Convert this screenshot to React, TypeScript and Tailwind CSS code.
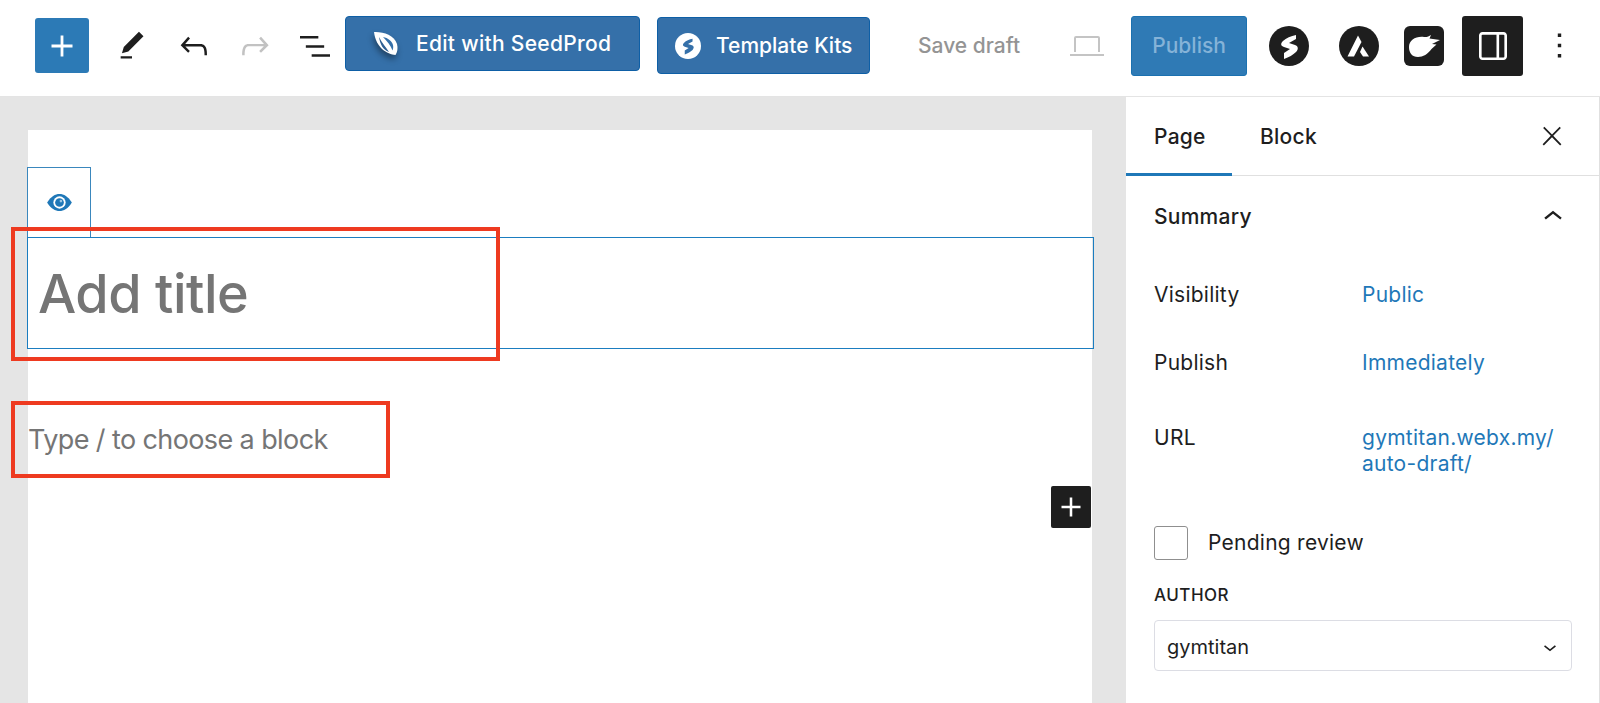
const BLUE = "text-[#1f78b8]";

function Wp({ d, size = 40, className = "" }: { d: string; size?: number; className?: string }) {
  return (
    <svg viewBox="0 0 24 24" width={size} height={size} fill="currentColor" className={`shrink-0 ${className}`}>
      <path d={d} />
    </svg>
  );
}

const ICONS = {
  plus: "M18 11.2h-5.2V6h-1.6v5.2H6v1.6h5.2V18h1.6v-5.2H18z",
  pencil: "M20.1 5.1L16.9 2 6.2 12.7l-1.3 4.4 4.5-1.3L20.1 5.1zM4 20.8h8v-1.5H4v1.5z",
  undo: "M18.3 11.7c-.6-.6-1.4-.9-2.3-.9H6.7l2.9-3.3-1.1-1-4.5 5L8.5 16l1-1-2.7-2.7H16c.5 0 .9.2 1.3.5 1 1 1 3.4 1 4.5v.3h1.5v-.2c0-1.5 0-4.3-1.5-5.7z",
  redo: "M15.6 6.5l-1.1 1 2.9 3.3H8c-.9 0-1.7.3-2.3.9-1.4 1.5-1.4 4.2-1.4 5.6v.2h1.5v-.3c0-1.1 0-3.5 1-4.5.3-.3.7-.5 1.3-.5h9.2L14.5 15l1.1 1.1 4.6-4.6-4.6-5z",
  list: "M3 6h11v1.5H3V6Zm3.5 5.5h11V13h-11v-1.5ZM21 17H10v1.5h11V17Z",
  sidebar: "M18 4H6c-1.1 0-2 .9-2 2v12c0 1.1.9 2 2 2h12c1.1 0 2-.9 2-2V6c0-1.1-.9-2-2-2zM6 18.5a.5.5 0 0 1-.5-.5V6a.5.5 0 0 1 .5-.5h8v13H6zm12.5-.5a.5.5 0 0 1-.5.5h-2.500v-13H18a.5.5 0 0 1 .5.5v12z",
  more: "M13 19h-2v-2h2v2zm0-6h-2v-2h2v2zm0-6h-2V5h2v2z",
  close: "M13 11.8l6.1-6.3-1-1-6.1 6.2-6.1-6.2-1 1 6.1 6.3-6.5 6.7 1 1 6.5-6.6 6.5 6.6 1-1z",
  chevronUp: "M6.5 12.4L12 8l5.5 4.4-.9 1.2L12 10l-4.5 3.6-1-1.2z",
  chevronDown: "M17.5 11.6L12 16l-5.5-4.4.9-1.2L12 14l4.500-3.6 1 1.2z",
};

function SeedLeaf() {
  return (
    <svg viewBox="0 0 25 25" width="25" height="25" className="shrink-0 drop-shadow-[-1px_4px_3px_rgba(0,0,0,0.4)]">
      <path d="M1 1c9-.5 20 3 23 12 1 4 .5 8-1.500 11C14 23 3 17 1 1z" fill="white" />
      <path d="M6 6c3 6 7 10 10 15-6-2-9-8-10-15z" fill="#2f5f92" />
      <path d="M10 6c5 1 9 4 10 8 .4 2 .2 4-.5 5.500C18 15 14 10 10 6z" fill="#3570a9" />
    </svg>
  );
}

function LogoS({ size, fill, bg }: { size: number; fill: string; bg: string }) {
  return (
    <svg viewBox="0 0 40 40" width={size} height={size} className="shrink-0">
      <circle cx="20" cy="20" r="20" fill={bg} />
      <path d="M27 9C22 10 17 12 14 15c-3 3-2 5 1 6l6 2-6 4v6c5-2 9-4 12-7 3-3 2-6-1-7l-6-2 7-4z" fill={fill} />
    </svg>
  );
}

function LogoAstra() {
  return (
    <svg viewBox="0 0 40 40" width="40" height="40" className="shrink-0">
      <circle cx="20" cy="20" r="20" fill="#1e1e1e" />
      <path d="M19 9.500L22.500 16 15 30.500H8.500z" fill="white" />
      <path d="M23.500 20.500L30 30.500h-6L21 26z" fill="white" />
    </svg>
  );
}

function LogoBird() {
  return (
    <svg viewBox="0 0 40 40" width="40" height="40" className="shrink-0">
      <rect width="40" height="40" rx="6" fill="#1e1e1e" />
      <path d="M5 21C5 14 12 10 20 11c3 .2 5-.6 7-2l-1.500 3.500L36 14l-8 4 4.500 .5-5 4.500C24 28 19 31 14 31 8 31 5 27 5 21z" fill="white" />
    </svg>
  );
}

function Eye() {
  return (
    <svg viewBox="0 0 28 20" width="27" height="19">
      <path d="M1 10C5 3.500 9.500 1 14 1s9 2.500 13 9c-4 6.500-8.500 9-13 9S5 16.500 1 10z" fill="#1f78b8" />
      <circle cx="14" cy="10" r="6.500" fill="white" />
      <circle cx="14" cy="10" r="4.600" fill="#1f78b8" />
      <circle cx="15.500" cy="8.500" r="1.400" fill="#9cc6e3" />
    </svg>
  );
}

function Header() {
  return (
    <header className="flex h-[97px] shrink-0 items-center border-b border-[#e4e4e4] bg-white pb-[5px] pl-[35px]">
      <button className="flex h-[55px] w-[54px] items-center justify-center rounded-[3px] bg-[#2c7ab6] text-white">
        <Wp d={ICONS.plus} size={42} />
      </button>
      <Wp d={ICONS.pencil} size={34} className="ml-[26px] text-[#1e1e1e]" />
      <Wp d={ICONS.undo} className="ml-[25px] text-[#1e1e1e]" />
      <Wp d={ICONS.redo} className="ml-[21px] text-[#c2c2c2]" />
      <Wp d={ICONS.list} className="ml-[20px] text-[#1e1e1e]" />
      <button className="mb-[5px] ml-[10px] flex h-[55px] w-[295px] items-center rounded-[4px] border border-[#0e5fa6] bg-[#3570a9] pl-[27px] text-[21px] font-medium tracking-[0.3px] text-white">
        <SeedLeaf />
        <span className="ml-[18px] pt-[2px]">Edit with SeedProd</span>
      </button>
      <button className="ml-[17px] flex h-[57px] w-[213px] items-center rounded-[4px] border border-[#0e5fa6] bg-[#3570a9] pl-[17px] text-[21px] font-medium text-white">
        <LogoS size={26} fill="#3570a9" bg="white" />
        <span className="ml-[15px]">Template Kits</span>
      </button>
      <span className="ml-[48px] text-[21px] font-medium text-[#949494]">Save draft</span>
      <svg viewBox="0 0 34 22" width="34" height="22" className="ml-[50px] shrink-0" fill="none" stroke="#c4c4c4" strokeWidth="2">
        <path d="M5 17V3a1 1 0 0 1 1-1h22a1 1 0 0 1 1 1v14" />
        <path d="M0 20h34" />
      </svg>
      <button className="ml-[27px] flex h-[60px] w-[116px] items-center justify-center rounded-[3px] border border-[#1b71b0] bg-[#2f7ab5] text-[21px] font-medium text-[#85b3d8]">
        Publish
      </button>
      <div className="ml-[22px]"><LogoS size={40} fill="white" bg="#1e1e1e" /></div>
      <div className="ml-[30px]"><LogoAstra /></div>
      <div className="ml-[25px]"><LogoBird /></div>
      <button className="ml-[18px] flex h-[60px] w-[61px] items-center justify-center rounded-[3px] bg-[#1e1e1e] text-white">
        <Wp d={ICONS.sidebar} size={42} />
      </button>
      <Wp d={ICONS.more} size={41} className="ml-[16px] text-[#1e1e1e]" />
    </header>
  );
}

function Canvas() {
  return (
    <main className="flex min-w-0 flex-1 flex-col bg-[#e5e5e5] pl-[28px] pr-[34px] pt-[33px]">
      <div className="flex-1 bg-white pt-[37px]">
        <div className="-ml-px -mb-px flex h-[71px] w-[64px] items-center justify-center border border-b-0 border-[#3a87bd] pb-[2px]">
          <Eye />
        </div>
        <div className="-ml-px -mr-[2px] flex h-[112px] items-center border border-[#1b7dc0] pl-[10px] pt-px">
          <span className="text-[54px] font-medium leading-none tracking-[-0.5px] text-[#757575]">Add title</span>
        </div>
        <p className="mt-[69px] text-[27px] leading-[44px] tracking-[-0.6px] text-[#757575]">Type / to choose a block</p>
        <div className="mr-px mt-[24px] flex justify-end">
          <button className="flex h-[42px] w-[40px] items-center justify-center rounded-[2px] bg-[#1e1e1e] text-white">
            <Wp d={ICONS.plus} size={38} />
          </button>
        </div>
      </div>
    </main>
  );
}

function Row({ label, className, children }: { label: string; className: string; children: React.ReactNode }) {
  return (
    <div className={`flex ${className}`}>
      <span className="w-[208px] shrink-0 text-[#1e1e1e]">{label}</span>
      <div className={BLUE}>{children}</div>
    </div>
  );
}

function Sidebar() {
  return (
    <aside className="w-[474px] shrink-0 border-r border-[#e0e0e0] bg-white text-[21px] leading-[26px] tracking-[0.25px] text-[#1e1e1e]">
      <div className="flex h-[79px] items-center border-b border-[#e0e0e0]">
        <div className="relative flex h-full w-[106px] items-center pl-[28px] pt-px font-medium">
          Page
          <span className="absolute -bottom-px left-0 h-[3px] w-full bg-[#1f78b8]" />
        </div>
        <span className="ml-[28px] pt-px font-medium">Block</span>
        <Wp d={ICONS.close} size={30} className="ml-auto mr-[32px] text-[#1e1e1e]" />
      </div>
      <div className="px-[28px]">
        <div className="mt-[28px] flex h-[26px] items-center justify-between font-medium">
          Summary
          <Wp d={ICONS.chevronUp} size={38} className="-mr-[1px] text-[#1e1e1e]" />
        </div>
        <Row label="Visibility" className="mt-[52px]">Public</Row>
        <Row label="Publish" className="mt-[42px]">Immediately</Row>
        <Row label="URL" className="mt-[49px]">
          gymtitan.webx.my/<br />auto-draft/
        </Row>
        <div className="mt-[49px] flex items-center">
          <span className="h-[34px] w-[34px] rounded-[3px] border border-[#8f8f8f] bg-white" />
          <span className="ml-[20px]">Pending review</span>
        </div>
        <div className="mt-[23px] text-[17px] font-medium uppercase leading-[24px] tracking-[0.5px]">Author</div>
        <div className="mt-[13px] flex h-[51px] w-[418px] items-center justify-between rounded-[4px] border border-[#dcdde4] pl-[12px] pr-[8px] pt-[2px] text-[20px] tracking-normal">
          gymtitan
          <Wp d={ICONS.chevronDown} size={26} className="text-[#1e1e1e]" />
        </div>
      </div>
    </aside>
  );
}

export default function App() {
  return (
    <div className="relative flex h-[703px] w-full flex-col overflow-hidden bg-white font-['Inter',sans-serif]">
      <Header />
      <div className="flex min-h-0 flex-1">
        <Canvas />
        <Sidebar />
      </div>
      {/* annotation boxes drawn over the shot */}
      <div className="absolute left-[11px] top-[227px] h-[134px] w-[489px] border-[4px] border-[#ee3a20]" />
      <div className="absolute left-[11px] top-[401px] h-[77px] w-[379px] border-[4px] border-[#ee3a20]" />
    </div>
  );
}
